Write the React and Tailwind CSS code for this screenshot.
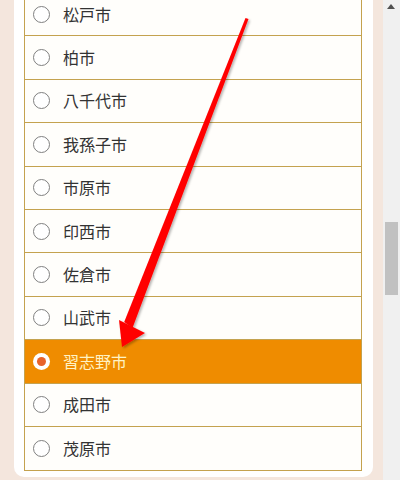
import React from "react";

const cities = ["松戸市", "柏市", "八千代市", "我孫子市", "市原市", "印西市", "佐倉市", "山武市", "習志野市", "成田市", "茂原市"];

function Radio({ checked }) {
  if (checked) {
    return (
      <span className="w-[17px] h-[17px] rounded-full bg-white flex items-center justify-center shrink-0">
        <span className="w-[9px] h-[9px] rounded-full bg-[#e8632a]" />
      </span>
    );
  }
  return <span className="w-[17px] h-[17px] rounded-full border border-[#808080] bg-white shrink-0" />;
}

export default function App() {
  return (
    <div className="relative w-[400px] h-[480px] flex overflow-hidden bg-[#f4e6dd]" style={{ fontFamily: '"Noto Sans CJK JP", "Noto Sans", sans-serif' }}>
      <div className="w-[383px] h-full flex">
        <div className="ml-[14px] w-[359px] h-[477px] bg-white rounded-b-[10px] pl-[10px] pr-[11px] overflow-hidden">
          <div className="mt-[-7px] border-x border-b border-[#c4a24f]">
            {cities.map((c, i) => {
              const sel = c === "習志野市";
              return (
                <div
                  key={c}
                  className={
                    "h-[43.4px] flex items-center pl-[8px] gap-[13px] " +
                    (i < cities.length - 1 ? "border-b border-[#c4a24f] " : "") +
                    (sel ? "bg-[#ef8c00] text-[#fff3c4]" : "bg-[#fffefb] text-[#333333]")
                  }
                >
                  <Radio checked={sel} />
                  <span className="text-[16px] leading-none pb-[1px]">{c}</span>
                </div>
              );
            })}
          </div>
        </div>
      </div>
      <div className="w-[17px] h-full bg-[#f0f0f0] relative">
        <div className="absolute left-[2px] top-[222px] w-[13px] h-[73px] bg-[#c1c1c1]" />
        <div className="absolute left-[4px] top-[4px] w-0 h-0 border-l-[4.5px] border-r-[4.5px] border-b-[5px] border-l-transparent border-r-transparent border-b-[#505050]" />
      </div>
      <svg className="absolute left-0 top-0 pointer-events-none" width="400" height="480" viewBox="0 0 400 480">
        <defs>
          <filter id="sh" x="-20%" y="-20%" width="140%" height="140%">
            <feDropShadow dx="1.5" dy="1.5" stdDeviation="1.2" floodColor="#000" floodOpacity="0.3" />
          </filter>
        </defs>
        <g filter="url(#sh)" fill="#ff0000">
          <polygon points="245.5,18 248.5,19 132.5,328 124.2,322" />
          <polygon points="119,320 145,333 122,347" />
        </g>
      </svg>
    </div>
  );
}
